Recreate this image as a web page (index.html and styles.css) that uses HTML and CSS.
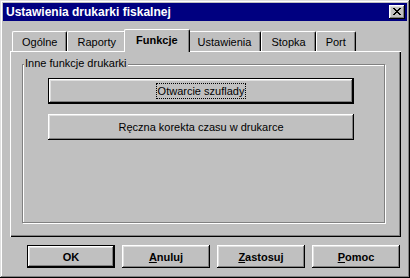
FILE: index.html
```html
<html>
    <head>
        <meta charset="utf-8">
        <link rel="stylesheet" href="styles.css">
        <title>Ustawienia drukarki fiskalnej</title>
    </head>
    <body>
        <div class="window">
            <div class="titlebar">
                <span class="title">Ustawienia drukarki fiskalnej</span>
                <span class="close">
                    <svg width="16" height="14" viewBox="0 0 16 14" shape-rendering="crispEdges">
                        <path d="M4 3h2v1H4zM10 3h2v1h-2zM5 4h2v1H5zM9 4h2v1H9zM6 5h4v1H6zM7 6h2v1H7zM6 7h4v1H6zM5 8h2v1H5zM9 8h2v1H9zM4 9h2v1H4zM10 9h2v1h-2z" fill="#000"/>
                    </svg>
                </span>
            </div>

            <div class="content">
                <div class="tabs">
                    <div class="tab">Ogólne</div>
                    <div class="tab">Raporty</div>
                    <div class="tab active">Funkcje</div>
                    <div class="tab">Ustawienia</div>
                    <div class="tab">Stopka</div>
                    <div class="tab">Port</div>
                </div>

                <div class="panel">
                    <div class="group">
                        <span class="group-label">Inne funkcje drukarki</span>
                        <button class="btn default wide"><span class="focus">Otwarcie szuflady</span></button>
                        <button class="btn wide">Ręczna korekta czasu w drukarce</button>
                    </div>
                </div>

                <div class="actions">
                    <button class="btn default">OK</button>
                    <button class="btn"><span><u>A</u>nuluj</span></button>
                    <button class="btn"><span><u>Z</u>astosuj</span></button>
                    <button class="btn"><span><u>P</u>omoc</span></button>
                </div>
            </div>
        </div>
    </body>
</html>
```

FILE: styles.css
```css
body{
    margin: 0;
    background-color: #c0c0c0;
}
.window{
    width: 410px;
    height: 278px;
    box-sizing: border-box;
    padding: 3px;
    background-color: #c0c0c0;
    box-shadow: inset -1px -1px #000, inset 1px 1px #dfdfdf, inset -2px -2px #808080, inset 2px 2px #fff;
    display: flex;
    flex-direction: column;
    font-family: "Liberation Sans", Arial, sans-serif;
    font-size: 11px;
    color: #000;
}
.titlebar{
    height: 18px;
    background-color: #000080;
    color: #fff;
    display: flex;
    align-items: center;
    justify-content: space-between;
    padding: 0 2px 0 3px;
    font-weight: bold;
    font-size: 12px;
}
.close{
    width: 16px;
    height: 14px;
    display: flex;
    background-color: #c0c0c0;
    box-shadow: inset -1px -1px #000, inset 1px 1px #fff, inset -2px -2px #808080, inset 2px 2px #dfdfdf;
}
.content{
    flex: 1;
    display: flex;
    flex-direction: column;
    padding: 8px 6px 0 7px;
}
.tabs{
    display: flex;
    align-items: flex-end;
    height: 22px;
    padding-left: 2px;
}
.tab{
    height: 20px;
    box-sizing: border-box;
    padding: 0 9px;
    display: flex;
    align-items: center;
    justify-content: center;
    border-left: 1px solid #fff;
    border-top: 1px solid #fff;
    border-right: 1px solid #000;
    border-radius: 2px 2px 0 0;
    box-shadow: inset -1px 0 #808080;
    background-color: #c0c0c0;
}
.tab.active{
    height: 23px;
    margin: 0 -2px -1px;
    padding: 0 11px 2px;
    position: relative;
    z-index: 1;
    font-weight: bold;
}
.panel{
    height: 186px;
    box-sizing: border-box;
    padding: 13px 0 0 12px;
    box-shadow: inset 1px 1px #fff, inset -1px -1px #000, inset -2px -2px #808080;
}
.group{
    position: relative;
    width: 363px;
    height: 159px;
    box-sizing: border-box;
    border: 1px solid #808080;
    box-shadow: 1px 1px #fff, inset 1px 1px #fff;
    padding: 13px 0 0 25px;
}
.group-label{
    position: absolute;
    top: -8px;
    left: 1px;
    padding: 0 1px;
    line-height: 13px;
    background-color: #c0c0c0;
}
.btn{
    font: inherit;
    color: #000;
    background-color: #c0c0c0;
    border: none;
    box-sizing: border-box;
    padding: 0;
    display: flex;
    align-items: center;
    justify-content: center;
    box-shadow: inset -1px -1px #000, inset 1px 1px #fff, inset -2px -2px #808080, inset 2px 2px #dfdfdf;
}
.btn.default{
    border: 1px solid #000;
}
.wide{
    width: 306px;
    height: 26px;
}
.wide + .wide{
    margin-top: 10px;
}
.focus{
    outline: 1px dotted #000;
    padding: 0 1px;
    line-height: 14px;
}
.actions{
    display: flex;
    justify-content: flex-end;
    gap: 7px;
    margin-top: 8px;
    padding-right: 1px;
}
.actions .btn{
    width: 88px;
    height: 23px;
    font-weight: bold;
}
```
